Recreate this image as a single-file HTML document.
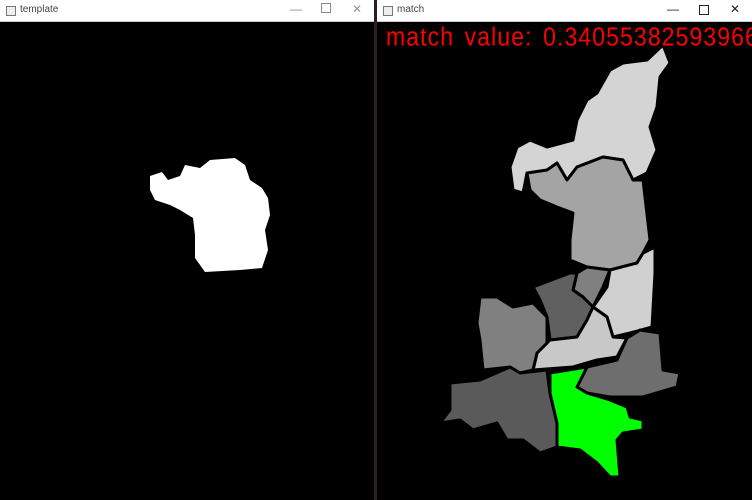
<!DOCTYPE html>
<html><head><style>
body{margin:0;width:752px;height:500px;background:#000;overflow:hidden;position:relative;font-family:"Liberation Sans",sans-serif}
.win{position:absolute;top:0;height:500px;background:#000}
.tb{position:absolute;top:0;left:0;right:0;height:21px;background:#fff;border-bottom:1px solid #ccc}
.tb .ic{position:absolute;left:6px;top:6px;width:8px;height:8px;border:1px solid #777;background:#eee}
.tb .t{position:absolute;left:20px;top:4px;font-size:10px;color:#444}
.tb .b{position:absolute;top:2px;font-size:12px;color:#444}
</style></head><body>
<div class="win" style="left:0;width:374px">
 <div class="tb"><div class="ic"></div><div class="t">template</div>
 <div class="b" style="left:290px;color:#888">&#8212;</div>
 <div class="b" style="left:321px;top:3px;width:8px;height:8px;border:1px solid #888"></div>
 <div class="b" style="left:352px;color:#999">&#10005;</div></div>
</div>
<div style="position:absolute;left:374px;top:0;width:3px;height:500px;background:#2a2020"></div>
<div class="win" style="left:377px;width:375px">
 <div class="tb"><div class="ic"></div><div class="t">match</div>
 <div class="b" style="left:290px;color:#222">&#8212;</div>
 <div class="b" style="left:322px;top:5px;width:8px;height:8px;border:1px solid #222"></div>
 <div class="b" style="left:353px;color:#222">&#10005;</div></div>
</div>
<svg width="752" height="500" style="position:absolute;left:0;top:0">
<polygon fill="#fff" points="150,176 162,172 168,180 180,176 185,165 200,168 210,160 235,158 245,165 250,180 262,188 268,198 270,215 265,230 268,250 262,268 240,270 205,272 195,258 195,235 193,218 180,210 170,205 155,200 150,190"/>
<g stroke="#000" stroke-width="3" stroke-linejoin="round">
<polygon fill="#d4d4d4" points="663,45 670,63 660,77 657,107 650,127 657,150 647,173 633,180 623,160 603,157 577,167 567,180 557,163 547,173 527,173 523,193 513,190 510,167 517,147 530,140 547,147 573,140 577,120 587,100 597,93 610,70 623,63 647,60"/>
<polygon fill="#a4a4a4" points="527,173 547,170 557,163 567,180 577,167 603,157 623,160 633,180 643,180 650,240 643,253 637,263 610,270 587,267 570,260 570,240 573,213 557,207 540,200 530,190"/>
<polygon fill="#d0d0d0" points="643,253 655,247 655,273 652,327 630,333 613,337 607,317 593,307 607,287 610,270 637,263"/>
<polygon fill="#808080" points="587,267 610,270 603,287 593,307 583,297 573,290 577,273"/>
<polygon fill="#606060" points="533,287 570,273 577,273 573,290 583,297 593,307 587,320 577,337 550,340 547,317 540,300"/>
<polygon fill="#c8c8c8" points="593,307 607,317 613,337 627,338 617,357 597,360 573,367 533,370 537,353 547,343 550,340 577,337 587,320"/>
<polygon fill="#808080" points="480,297 497,297 513,307 533,303 547,317 547,343 537,353 533,370 520,373 510,367 483,370 480,340 477,323"/>
<polygon fill="#6e6e6e" points="627,338 640,330 660,333 663,370 680,373 677,387 643,397 610,397 587,393 577,387 587,367 617,360"/>
<polygon fill="#5a5a5a" points="450,383 480,380 510,367 520,373 547,370 550,393 557,423 557,447 540,453 523,440 507,440 497,423 473,430 460,420 440,423 450,410"/>
<polygon fill="#00ff00" points="550,373 587,367 577,387 587,393 610,400 627,407 630,417 643,420 643,430 623,433 617,440 620,477 610,477 597,463 580,450 557,447 557,423 550,393"/>
</g>
</svg>
<div style="position:absolute;left:386px;top:22px;font-size:23px;color:#f00;white-space:nowrap;letter-spacing:1.1px;word-spacing:3px;transform:scaleY(1.12);transform-origin:0 0">match value: 0.340553825939666</div>
</body></html>
